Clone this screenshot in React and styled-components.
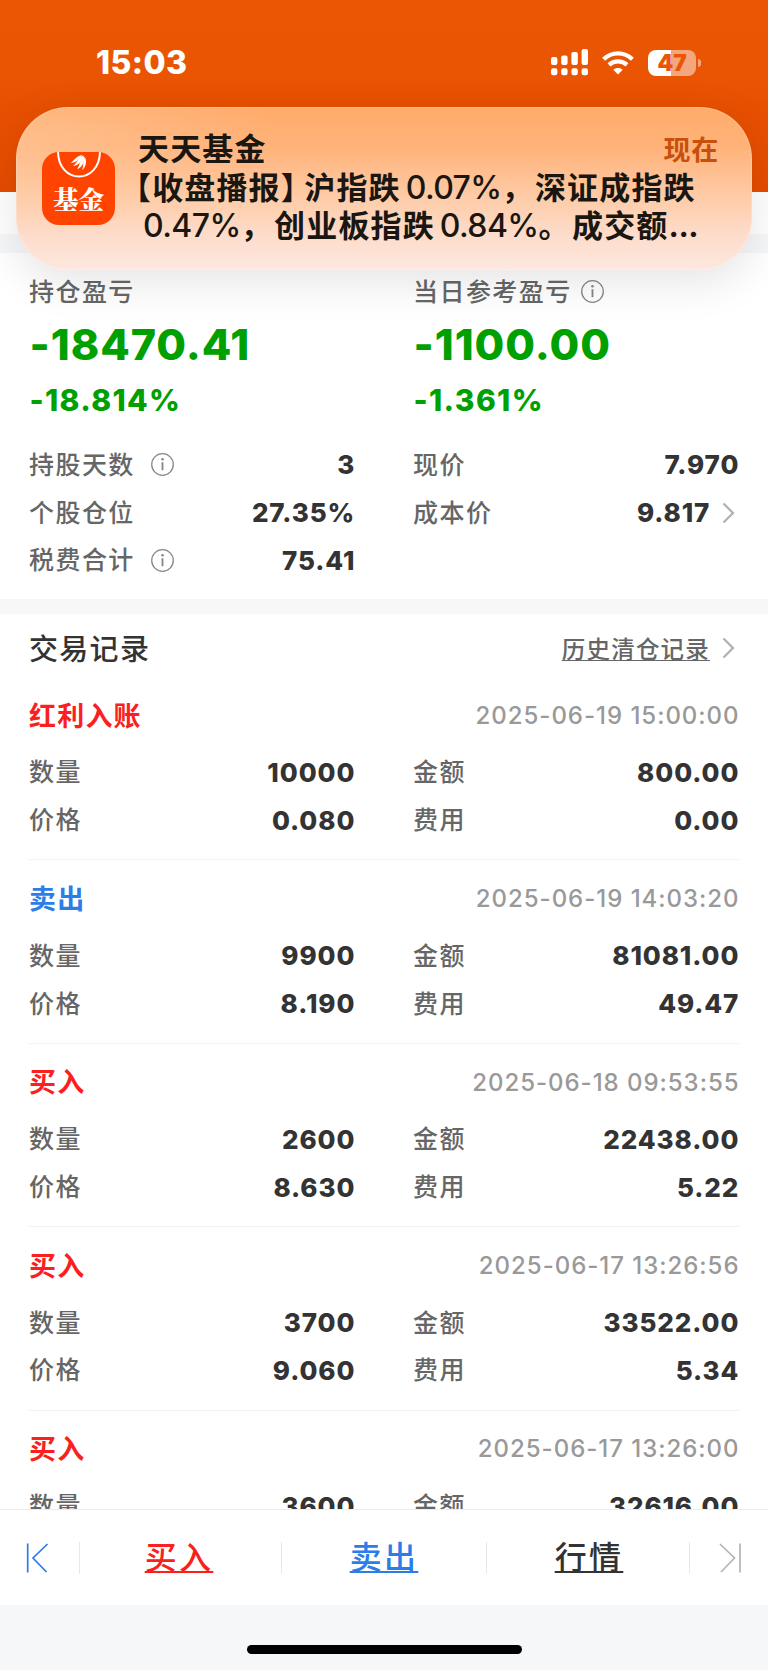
import React from "react";
import styled, { createGlobalStyle } from "styled-components";

const Global = createGlobalStyle`
  * { box-sizing: border-box; }
  body {
    margin: 0;
    background: #fff;
    font-family: Inter, "Noto Sans CJK SC", sans-serif;
    color: #333;
  }
`;

const Screen = styled.div`
  position: relative;
  width: 768px;
  height: 1670px;
  overflow: hidden;
  display: flex;
  flex-direction: column;
  background: #fff;
`;

const Header = styled.header`
  flex: none;
  height: 192px;
  padding: 44px 67px 0 96px;
  background: linear-gradient(#ea5604 0, #ea5503 70px, #e85001 106px, #e54c00 192px);
`;

const StatusBar = styled.div`
  height: 37px;
  display: flex;
  align-items: center;
`;

const Clock = styled.span`
  flex: 1;
  color: #fff;
  font-size: 32px;
  font-weight: 800;
  line-height: 37px;
  letter-spacing: 0.4px;
`;

const StatusIcons = styled.div`
  display: flex;
  align-items: center;
  gap: 14px;
`;

const Battery = styled.div`
  display: flex;
  align-items: center;
  gap: 2px;
`;

const BatteryBody = styled.div`
  width: 48px;
  height: 26px;
  border-radius: 8px;
  background: linear-gradient(90deg, #fff 48%, #f4a67e 48%);
  color: #ea5604;
  font-size: 22.5px;
  font-weight: 900;
  line-height: 26px;
  text-align: center;
`;

const BatteryCap = styled.div`
  width: 3px;
  height: 8px;
  border-radius: 0 4px 4px 0;
  background: #f4a67e;
`;

const Banner = styled.section`
  position: absolute;
  left: 16px;
  top: 107px;
  width: 736px;
  height: 163px;
  border-radius: 52px;
  padding: 22px 34px 0 26px;
  display: flex;
  background:
    radial-gradient(ellipse 260px 90px at 0 30px, rgba(255, 214, 180, 0.35), transparent),
    linear-gradient(#ffab6a 0, #ffb37a 25%, #fecba6 55%, #fddcca 78%, #fce8df 100%);
  box-shadow: 0 12px 44px rgba(0, 0, 0, 0.11), inset 0 0 1px 1px rgba(255, 255, 255, 0.25);
`;

const AppIcon = styled.div`
  flex: none;
  width: 73px;
  height: 73px;
  margin-top: 23px;
  border-radius: 17px;
  overflow: hidden;
  background: #ff4400;
  color: #fff;
  display: flex;
  flex-direction: column;
  align-items: center;
`;

const AppIconText = styled.span`
  font-family: "Noto Serif CJK SC", "Noto Sans CJK SC", serif;
  font-size: 25.5px;
  font-weight: 900;
  line-height: 30px;
  margin-top: 5px;
`;

const BannerText = styled.div`
  flex: 1;
  margin-left: 23px;
  color: #1a1612;
  font-size: 31px;
  font-weight: 700;
  letter-spacing: 1.15px;
  line-height: 38px;
`;

const BannerTitleRow = styled.div`
  display: flex;
  justify-content: space-between;
  height: 40px;
  line-height: 40px;
`;

const BannerTime = styled.span`
  color: #c8500c;
  font-size: 27px;
  font-weight: 700;
  line-height: 43px;
  letter-spacing: 0.8px;
  margin-right: -1px;
`;

const BannerLine = styled.div`
  display: flex;
  height: 38px;
  white-space: nowrap;
`;

const Figure = styled.span`
  font-size: 32px;
  font-weight: 500;
  letter-spacing: -0.6px;
  margin-left: 5px;
`;

const Punct = styled.span`
  letter-spacing: 2.5px;
`;

const OpenBracket = styled.span`
  margin-left: -18px;
`;

const CloseBracket = styled.span`
  letter-spacing: -7.5px;
`;

const Dots = styled.span`
  letter-spacing: -0.4px;
`;

const TopStrip = styled.div`
  flex: none;
  height: 61px;
  border-bottom: 19px solid #f6f7f9;
`;

const Summary = styled.section`
  flex: none;
  height: 361px;
  border-bottom: 15px solid #f6f7f9;
  padding: 20.5px 29px 0;
`;

const Columns = styled.div`
  display: grid;
  grid-template-columns: 325px 325px;
  column-gap: 59px;
`;

const Label = styled.span`
  display: inline-flex;
  align-items: center;
  color: #666;
  font-size: 25px;
  font-weight: 500;
  line-height: 36px;
  letter-spacing: 1.45px;
  white-space: nowrap;
  gap: ${(p) => p.$gap || 0}px;
`;

const Profit = styled.div`
  color: #00a000;
  font-size: 43px;
  font-weight: 800;
  line-height: 52px;
  margin-top: 8.5px;
  margin-left: 0.5px;
  letter-spacing: 0.95px;
`;

const ProfitRate = styled.div`
  color: #00a000;
  font-size: 30px;
  font-weight: 800;
  line-height: 36px;
  margin-top: 12px;
  margin-left: 0.5px;
  letter-spacing: 1.35px;
`;

const Stats = styled(Columns)`
  margin-top: 23px;
`;

const StatRow = styled.div`
  height: 47.8px;
  display: flex;
  align-items: center;
  justify-content: space-between;
`;

const Value = styled.span`
  color: #333;
  font-size: 26px;
  font-weight: 800;
  letter-spacing: 0.9px;
  margin-right: -1.3px;
  display: inline-flex;
  align-items: center;
  gap: 12px;
`;

const Records = styled.main`
  flex: none;
  height: 895px;
  overflow: hidden;
  padding: 0 29px;
`;

const RecordsHead = styled.div`
  height: 63px;
  padding-top: 4px;
  display: flex;
  align-items: center;
  justify-content: space-between;
`;

const SectionTitle = styled.h2`
  margin: 0 0 1px;
  font-size: 29px;
  font-weight: 500;
  letter-spacing: 1.3px;
`;

const HistoryLink = styled.a`
  display: flex;
  align-items: center;
  gap: 12px;
  color: #666;
  font-size: 23.5px;
  font-weight: 500;
  letter-spacing: 1.2px;
  u { text-decoration-thickness: 1px; text-underline-offset: 2px; }
`;

const Record = styled.article`
  height: 183.4px;
  padding-top: 17px;
  border-bottom: 1px solid #f1f2f4;
`;

const RecordHead = styled.div`
  height: 42px;
  margin-bottom: 12.6px;
  display: flex;
  align-items: center;
  justify-content: space-between;
`;

const Kind = styled.span`
  color: ${(p) => (p.$sell ? "#2b7de8" : "#fa2020")};
  font-size: 27px;
  font-weight: 700;
  letter-spacing: 1.2px;
  margin-bottom: 2px;
`;

const Time = styled.time`
  color: #999;
  font-size: 24px;
  font-weight: 500;
  letter-spacing: 0.97px;
  margin: 0.5px -0.5px 0 0;
`;

const ActionBar = styled.nav`
  flex: none;
  height: 96px;
  border-top: 1px solid #ececee;
  background: #fff;
  display: flex;
  align-items: center;
`;

const Step = styled.button`
  width: ${(p) => p.$w}px;
  height: 32px;
  padding: 0 0 0 ${(p) => p.$pad}px;
  border: 0;
  border-left: ${(p) => (p.$divided ? "1px solid #e8e8ec" : "0")};
  background: none;
  text-align: left;
  line-height: 0;
`;

const Action = styled.a`
  width: ${(p) => p.$w}px;
  height: 32px;
  border-left: 1px solid #e8e8ec;
  padding: 0 ${(p) => p.$right || 0}px 5px ${(p) => p.$left || 0}px;
  display: flex;
  align-items: center;
  justify-content: center;
  color: ${(p) => p.$color};
  font-size: 32px;
  font-weight: 500;
  letter-spacing: 2.3px;
  u { text-decoration-thickness: 2px; text-underline-offset: 2px; }
`;

const HomeArea = styled.footer`
  flex: 1;
  background: #f6f7f9;
  padding-top: 40px;
`;

const HomeIndicator = styled.div`
  width: 275px;
  height: 9px;
  margin: 0 auto;
  border-radius: 5px;
  background: #000;
`;

const Info = () => (
  <svg width="23" height="23" viewBox="0 0 23 23" fill="none" stroke="#888" strokeWidth="1.3">
    <circle cx="11.5" cy="11.5" r="10.8" />
    <path d="M11.5 9.2V17.2" strokeWidth="1.9" />
    <circle cx="11.5" cy="6.2" r="1.3" fill="#888" stroke="none" />
  </svg>
);

const Chevron = () => (
  <svg width="17" height="22" viewBox="0 0 17 22" fill="none" stroke="#b2b2b2" strokeWidth="2.3">
    <path d="M1.5 1.5L11 11L1.5 20.5" />
  </svg>
);

const Signal = () => (
  <svg width="37" height="27" viewBox="0 0 37 27" fill="#fff">
    {[8, 6.5, 3, 0].map((y, i) => (
      <g key={i}>
        <rect x={i * 10.2} y={y} width="6.4" height={16 - y} rx="2" />
        <rect x={i * 10.2} y="19.3" width="6.4" height="7" rx="2.2" />
      </g>
    ))}
  </svg>
);

const Wifi = () => (
  <svg width="32" height="24" viewBox="0 0 32 24" fill="none" stroke="#fff" strokeWidth="4.2">
    <path d="M1.6 8.3C9.8 .4 22.2 .4 30.4 8.3" />
    <path d="M7 13.9C12.1 9.1 19.9 9.1 25 13.9" />
    <path d="M16 23.4L11.3 18.8C13.8 16.3 18.2 16.3 20.7 18.8Z" fill="#fff" stroke="none" />
  </svg>
);

const FundMark = () => (
  <svg width="46" height="26" viewBox="0 0 46 26" fill="none">
    <path d="M2 -1C2 33 44 33 44 -1" stroke="#fff" strokeWidth="2" />
    <g fill="#fff">
      <path d="M14.500 10.500C18 9.500 19.500 4 26.500 3C24.500 7 19 11.500 14.500 10.500Z" />
      <path d="M17 14C20.500 12 22 6 27.500 3.500C27 8.500 22 14 17 14Z" />
      <path d="M21 17.300C23.500 14 24 8 28 4C29.300 9.500 26 15.500 21 17.300Z" />
      <path d="M26.300 18C27.500 14 27 9 28.800 4.500C31 9.500 30 15 26.300 18Z" />
    </g>
  </svg>
);

const records = [
  { kind: "红利入账", time: "2025-06-19 15:00:00", qty: "10000", price: "0.080", amount: "800.00", fee: "0.00" },
  { kind: "卖出", sell: true, time: "2025-06-19 14:03:20", qty: "9900", price: "8.190", amount: "81081.00", fee: "49.47" },
  { kind: "买入", time: "2025-06-18 09:53:55", qty: "2600", price: "8.630", amount: "22438.00", fee: "5.22" },
  { kind: "买入", time: "2025-06-17 13:26:56", qty: "3700", price: "9.060", amount: "33522.00", fee: "5.34" },
  { kind: "买入", time: "2025-06-17 13:26:00", qty: "3600", price: "", amount: "32616.00", fee: "" },
];

const Stat = ({ label, value, info, more }) => (
  <StatRow>
    <Label $gap={16}>
      {label}
      {info && <Info />}
    </Label>
    <Value>
      {value}
      {more && <Chevron />}
    </Value>
  </StatRow>
);

export default function App() {
  return (
    <>
      <Global />
      <Screen>
        <Header>
          <StatusBar>
            <Clock>15:03</Clock>
            <StatusIcons>
              <Signal />
              <Wifi />
              <Battery>
                <BatteryBody>47</BatteryBody>
                <BatteryCap />
              </Battery>
            </StatusIcons>
          </StatusBar>
        </Header>

        <TopStrip />

        <Summary>
          <Columns>
            <div>
              <Label>持仓盈亏</Label>
              <Profit>-18470.41</Profit>
              <ProfitRate>-18.814%</ProfitRate>
            </div>
            <div>
              <Label $gap={9}>
                当日参考盈亏
                <Info />
              </Label>
              <Profit>-1100.00</Profit>
              <ProfitRate>-1.361%</ProfitRate>
            </div>
          </Columns>
          <Stats>
            <div>
              <Stat label="持股天数" value="3" info />
              <Stat label="个股仓位" value="27.35%" />
              <Stat label="税费合计" value="75.41" info />
            </div>
            <div>
              <Stat label="现价" value="7.970" />
              <Stat label="成本价" value="9.817" more />
            </div>
          </Stats>
        </Summary>

        <Records>
          <RecordsHead>
            <SectionTitle>交易记录</SectionTitle>
            <HistoryLink>
              <u>历史清仓记录</u>
              <Chevron />
            </HistoryLink>
          </RecordsHead>
          {records.map((r) => (
            <Record key={r.time}>
              <RecordHead>
                <Kind $sell={r.sell}>{r.kind}</Kind>
                <Time>{r.time}</Time>
              </RecordHead>
              <Columns>
                <Stat label="数量" value={r.qty} />
                <Stat label="金额" value={r.amount} />
                {r.price && <Stat label="价格" value={r.price} />}
                {r.fee && <Stat label="费用" value={r.fee} />}
              </Columns>
            </Record>
          ))}
        </Records>

        <ActionBar>
          <Step $w={79} $pad={26}>
            <svg width="23" height="30" viewBox="0 0 23 30" fill="none" stroke="#2b7de8" strokeWidth="1.7">
              <path d="M1.700 .5V29.500M21.500 1L7 15L20.500 29" />
            </svg>
          </Step>
          <Action $w={202} $color="#fa2020" $right={3}><u>买入</u></Action>
          <Action $w={205} $color="#2b7de8"><u>卖出</u></Action>
          <Action $w={203} $color="#333" $left={2}><u>行情</u></Action>
          <Step $w={79} $pad={29} $divided>
            <svg width="23" height="30" viewBox="0 0 23 30" fill="none" stroke="#b5b5b5" strokeWidth="1.7">
              <path d="M21 .5V29.500M1 1L15.500 15L2 29" />
            </svg>
          </Step>
        </ActionBar>

        <HomeArea>
          <HomeIndicator />
        </HomeArea>

        <Banner>
          <AppIcon>
            <FundMark />
            <AppIconText>基金</AppIconText>
          </AppIcon>
          <BannerText>
            <BannerTitleRow>
              天天基金
              <BannerTime>现在</BannerTime>
            </BannerTitleRow>
            <BannerLine>
              <OpenBracket>【</OpenBracket>收盘播报<CloseBracket>】</CloseBracket>沪指跌
              <Figure>0.07%</Figure><Punct>，</Punct>深证成指跌
            </BannerLine>
            <BannerLine>
              <Figure>0.47%</Figure><Punct>，</Punct>创业板指跌
              <Figure>0.84%</Figure><Punct>。</Punct>成交额<Dots>...</Dots>
            </BannerLine>
          </BannerText>
        </Banner>
      </Screen>
    </>
  );
}
